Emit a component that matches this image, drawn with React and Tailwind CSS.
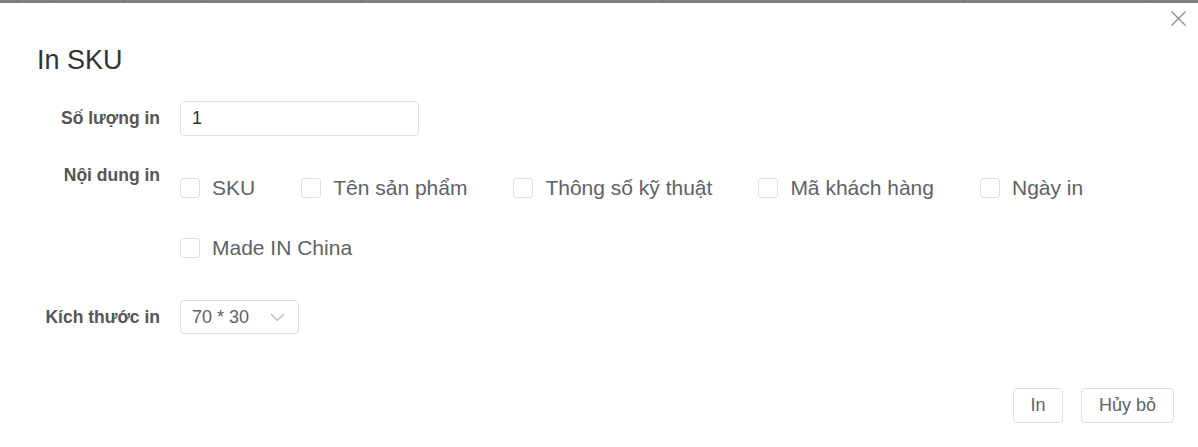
import { useState } from 'react';

const options = ['SKU', 'Tên sản phẩm', 'Thông số kỹ thuật', 'Mã khách hàng', 'Ngày in', 'Made IN China'];

export default function App() {
  const [qty, setQty] = useState('1');
  const [checked, setChecked] = useState({});

  return (
    <div className="w-[1198px] h-[447px] bg-white overflow-hidden text-[#333]" style={{ fontFamily: '"Liberation Sans", Arial, sans-serif' }}>
      {/* background strip behind the modal */}
      <div className="h-[3px] bg-[#808080] flex">
        <div className="w-[18px] border-r border-[#6f6f6f]" />
        <div className="w-[36px] border-r border-[#6f6f6f]" />
        <div className="w-[71px] border-r border-[#6f6f6f]" />
        <div className="w-[81px] border-r border-[#6f6f6f]" />
        <div className="w-[156px] border-r border-[#6f6f6f]" />
        <div className="w-[301px] border-r border-[#6f6f6f]" />
        <div className="w-[301px] border-r border-[#6f6f6f]" />
        <div className="w-[183px] border-r border-[#6f6f6f]" />
      </div>

      <div className="relative h-[444px] rounded-tr-[4px] bg-white">
        <button className="absolute right-[11px] top-[7px] text-[#8c8c8c]">
          <svg width="17" height="17" viewBox="0 0 17 17" fill="none" stroke="currentColor" strokeWidth="1.3">
            <path d="M1.5 1.5 L15.5 15.5 M15.5 1.5 L1.5 15.5" />
          </svg>
        </button>

        <h2 className="pl-[37px] pt-[42px] text-[27px] leading-[30px] text-[#333]">In SKU</h2>

        <div className="mt-[26px] flex items-center">
          <label className="w-[161px] pr-[1px] text-right text-[17.5px] font-bold text-[#555]">Số lượng in</label>
          <input
            value={qty}
            onChange={(e) => setQty(e.target.value)}
            className="ml-[19px] w-[239px] h-[35px] rounded-[4px] border border-[#dcdfe6] px-[11px] text-[18px] text-[#333] outline-none"
          />
        </div>

        <div className="mt-[28px] flex items-start">
          <label className="w-[161px] pr-[1px] text-right text-[17.5px] font-bold text-[#555] leading-[22px]">Nội dung in</label>
          <div className="ml-[19px] mt-[14px] flex flex-wrap w-[960px] gap-y-[40px]">
            {options.map((o) => (
              <label key={o} className="flex items-center mr-[46px] h-[20px] cursor-pointer" onClick={() => setChecked({ ...checked, [o]: !checked[o] })}>
                <span className={`w-[20px] h-[20px] rounded-[3px] border ${checked[o] ? 'border-[#409eff] bg-[#409eff]' : 'border-[#dcdfe6] bg-white'}`} />
                <span className="ml-[12px] text-[21px] text-[#606266] whitespace-nowrap">{o}</span>
              </label>
            ))}
          </div>
        </div>

        <div className="mt-[42px] flex items-center">
          <label className="w-[161px] pr-[1px] text-right text-[17.5px] font-bold text-[#555]">Kích thước in</label>
          <div className="ml-[19px] w-[119px] h-[34px] rounded-[4px] border border-[#dcdfe6] flex items-center justify-between pl-[11px] pr-[13px]">
            <span className="text-[18px] text-[#606266]">70 * 30</span>
            <svg width="15" height="9" viewBox="0 0 15 9" fill="none" stroke="#b4b4b4" strokeWidth="1.2">
              <path d="M1 1 L7.5 7.5 L14 1" />
            </svg>
          </div>
        </div>

        <div className="mt-[54px] flex justify-end pr-[24px] gap-[18px]">
          <button className="w-[50px] h-[35px] rounded-[4px] border border-[#dcdfe6] text-[18px] text-[#606266]">In</button>
          <button className="w-[93px] h-[35px] rounded-[4px] border border-[#dcdfe6] text-[18px] text-[#606266]">Hủy bỏ</button>
        </div>
      </div>
    </div>
  );
}
